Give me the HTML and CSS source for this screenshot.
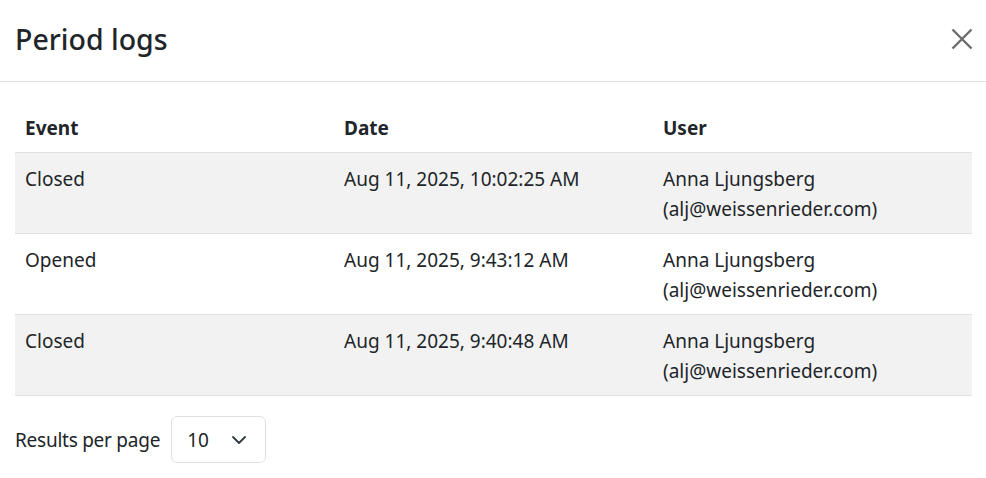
FILE: index.html
```html
<!DOCTYPE html>
<html lang="en">
<head>
<meta charset="utf-8">
<title>Period logs</title>
<link rel="stylesheet" href="styles.css">
</head>
<body>
<div class="modal">
  <header class="modal-header">
    <h1 class="modal-title">Period logs</h1>
    <button class="close" type="button" aria-label="Close">
      <svg width="22" height="22" viewBox="0 0 22 22"><path d="M1.5 1.5 L20.5 20.5 M20.5 1.5 L1.5 20.5" stroke="currentColor" stroke-width="2.4" fill="none"/></svg>
    </button>
  </header>
  <div class="modal-body">
    <table class="logs">
      <thead>
        <tr><th>Event</th><th>Date</th><th>User</th></tr>
      </thead>
      <tbody>
        <tr class="odd"><td>Closed</td><td>Aug 11, 2025, 10:02:25 AM</td><td>Anna Ljungsberg<br>(alj@weissenrieder.com)</td></tr>
        <tr><td>Opened</td><td>Aug 11, 2025, 9:43:12 AM</td><td>Anna Ljungsberg<br>(alj@weissenrieder.com)</td></tr>
        <tr class="odd"><td>Closed</td><td>Aug 11, 2025, 9:40:48 AM</td><td>Anna Ljungsberg<br>(alj@weissenrieder.com)</td></tr>
      </tbody>
    </table>
    <div class="pager">
      <span class="pager-label">Results per page</span>
      <div class="select">
        <span>10</span>
        <svg width="14" height="8" viewBox="0 0 14 8"><path d="M1 1 L7 7 L13 1" stroke="currentColor" stroke-width="1.8" fill="none" stroke-linecap="round" stroke-linejoin="round"/></svg>
      </div>
    </div>
  </div>
</div>
</body>
</html>
```
FILE: styles.css
```css
html, body {
  margin: 0;
  padding: 0;
  background: #fff;
}
body {
  font-family: "Noto Sans", "Open Sans", "DejaVu Sans", sans-serif;
  color: #212529;
  font-size: 19px;
  line-height: 30px;
}
.modal {
  width: 986px;
}
.modal-header {
  height: 82px;
  box-sizing: border-box;
  border-bottom: 1px solid #dee2e6;
  display: flex;
  align-items: center;
  justify-content: space-between;
  padding: 0 13px 0 15px;
}
.modal-title {
  margin: -3px 0 0;
  font-size: 28.5px;
  font-weight: 500;
  line-height: 36px;
  color: #212529;
}
.close {
  border: 0;
  background: none;
  padding: 0;
  width: 22px;
  height: 22px;
  color: #6c6c6c;
  display: flex;
  margin-top: -3px;
}
.modal-body {
  padding: 20px 14px 0 15px;
}
.logs {
  width: 957px;
  border-collapse: collapse;
  table-layout: fixed;
}
.logs th, .logs td {
  text-align: left;
  vertical-align: top;
  padding: 11px 10px 9px;
  border-bottom: 1px solid #dee2e6;
}
.logs th {
  font-weight: 700;
}
.logs tr.odd td {
  background: #f2f2f2;
}
.pager {
  display: flex;
  align-items: center;
  gap: 11px;
  margin-top: 20px;
}
.pager-label {
  color: #212529;
  letter-spacing: -0.25px;
}
.select {
  width: 95px;
  height: 47px;
  box-sizing: border-box;
  border: 1px solid #dee2e6;
  border-radius: 6px;
  display: flex;
  align-items: center;
  justify-content: space-between;
  padding: 0 19px 0 15px;
  color: #212529;
}
.select svg {
  color: #343a40;
}
```
